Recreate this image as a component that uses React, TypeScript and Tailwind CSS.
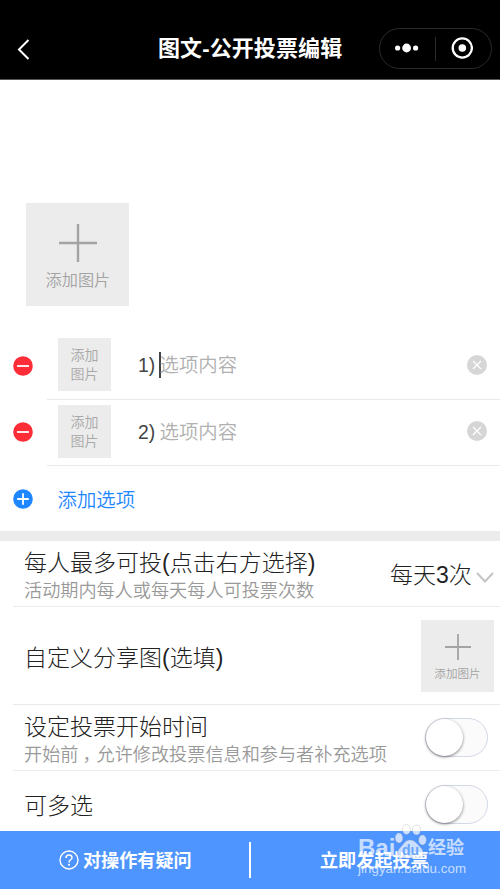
import React, { useState } from "react";

const PlusIcon = ({ size, stroke }: { size: number; stroke: number }) => (
  <svg width={size} height={size} viewBox={`0 0 ${size} ${size}`}>
    <path
      d={`M${size / 2} 0V${size}M0 ${size / 2}H${size}`}
      stroke="#a3a3a3"
      strokeWidth={stroke}
      fill="none"
    />
  </svg>
);

const RoundIcon = ({ type }: { type: "add" | "remove" }) => (
  <svg width="20" height="20" viewBox="0 0 20 20">
    <circle cx="10" cy="10" r="9.8" fill={type === "add" ? "#1f87ff" : "#ff2d37"} />
    <path
      d={type === "add" ? "M4.2 10H15.8M10 4.2V15.8" : "M4 10H16"}
      stroke="#fff"
      strokeWidth="1.8"
    />
  </svg>
);

const ClearIcon = () => (
  <svg width="20" height="20" viewBox="0 0 20 20">
    <circle cx="10" cy="10" r="10" fill="#d6d6d6" />
    <path d="M6 6L14 14M14 6L6 14" stroke="#fff" strokeWidth="1.2" />
  </svg>
);

const Header = () => (
  <div className="flex h-20 items-start border-b border-[#555] bg-black">
    <div className="w-[158px] pt-[39px] pl-[17px]">
      <svg width="14" height="22" viewBox="0 0 14 22">
        <path d="M11.5 1L2 10.5L11.5 20" stroke="#fff" strokeWidth="2" fill="none" />
      </svg>
    </div>
    <div className="w-[221px] pt-[34px] text-[22px] leading-[30px] font-bold tracking-[0.1px] whitespace-nowrap text-white">
      图文-公开投票编辑
    </div>
    <div className="mt-7 flex h-[41px] w-[113px] items-center rounded-full border border-[#2b2b2b]">
      <div className="flex w-[55px] items-center justify-center pr-[2px] pb-px">
        <svg width="24" height="10" viewBox="0 0 24 10">
          <circle cx="2.6" cy="5" r="2.6" fill="#fff" />
          <circle cx="11.6" cy="5" r="4.4" fill="#fff" />
          <circle cx="20.6" cy="5" r="2.6" fill="#fff" />
        </svg>
      </div>
      <div className="h-6 w-px bg-[#2b2b2b]" />
      <div className="flex flex-1 pb-px pl-[15px]">
        <svg width="22" height="22" viewBox="0 0 22 22">
          <circle cx="11.3" cy="11" r="9.6" fill="none" stroke="#fff" strokeWidth="2.3" />
          <circle cx="11.3" cy="11" r="3.8" fill="#fff" />
        </svg>
      </div>
    </div>
  </div>
);

const OptionRow = ({ index, active }: { index: number; active?: boolean }) => (
  <div className="flex h-[66.5px] pl-[13px]">
    <div className="w-[34px] pt-[22.6px]">
      <RoundIcon type="remove" />
    </div>
    <div className="flex flex-1 border-b-[1.5px] border-[#e9e9e9] pl-[11px]">
      <div className="mt-[5px] h-[53px] w-[53px] bg-[#ececec] pt-2 text-center text-sm leading-[19px] text-[#a8a8a8]">
        添加
        <br />
        图片
      </div>
      <div className="ml-[27px] flex pt-[19px] text-[19.4px] leading-[26px]">
        <span className="w-[21px] text-[#444]">{index})</span>
        <span className={active ? "h-[26px] w-0.5 bg-[#444]" : "w-0.5"} />
        <span className="-ml-[1.5px] text-[#b0b0b0]">选项内容</span>
      </div>
      <div className="ml-auto pt-[21.6px] pr-[13px]">
        <ClearIcon />
      </div>
    </div>
  </div>
);

const Switch = () => {
  const [on, setOn] = useState(false);
  return (
    <button
      type="button"
      onClick={() => setOn(!on)}
      className={`flex h-[39px] w-[63px] rounded-full border border-[#d3d8e6] ${
        on ? "justify-end bg-[#4e95ff]" : "bg-[#fbfbfb]"
      }`}
    >
      <span className="h-[37px] w-[37px] rounded-full bg-white shadow-[0_1px_3px_rgba(0,0,0,0.5)]" />
    </button>
  );
};

const Watermark = () => (
  <div className="pointer-events-none absolute top-[-10px] left-[358px] h-[60px] w-[112px] text-white/70">
    <div className="flex h-[40px] items-end font-bold">
      <span className="w-[36px] font-['Liberation_Sans'] text-[24px] leading-[26px]">Bai</span>
      <svg width="34" height="36" viewBox="0 0 34 36" className="mb-[2px]">
        <g fill="#fff" fillOpacity="0.7" stroke="#999" strokeOpacity="0.4" strokeWidth="0.7">
          <ellipse cx="5" cy="15" rx="3.8" ry="5" />
          <ellipse cx="12.5" cy="6.5" rx="4" ry="5" />
          <ellipse cx="22.5" cy="7" rx="4" ry="5" />
          <ellipse cx="28.5" cy="17" rx="3.8" ry="5" />
          <path d="M16 17C11 17 9 22 6 25C2 29 4 35 9 35H24C29 35 31 29 27 25C24 22 21 17 16 17Z" />
        </g>
        <text x="8" y="32" fontSize="14" fontFamily="Liberation Sans" fontWeight="bold" fill="#68a4ff">
          du
        </text>
      </svg>
      <span className="text-[18px] leading-[26px]">经验</span>
    </div>
    <div className="font-['Liberation_Sans'] text-[13.3px] leading-4 font-medium tracking-[0.05px]">
      jingyan.baidu.com
    </div>
  </div>
);

const App = () => {
  return (
    <div className="h-[889px] w-[500px] overflow-hidden bg-white font-['Liberation_Sans','Noto_Sans_CJK_SC',sans-serif] font-[350]">
      <Header />
      <div className="h-[253px] pt-[123px] pl-[26.4px]">
        <div className="flex h-[103px] w-[103px] flex-col items-center bg-[#ececec] pt-[21px] text-[16.2px] leading-6 text-[#a3a3a3]">
          <PlusIcon size={38} stroke={2.4} />
          <span className="mt-[6px]">添加图片</span>
        </div>
      </div>
      <OptionRow index={1} active />
      <OptionRow index={2} />
      <div className="flex h-[65px] pt-[23px] pl-[13px]">
        <RoundIcon type="add" />
        <span className="-mt-[2px] ml-[24.5px] text-[19.4px] leading-[26px] text-[#1f87ff]">添加选项</span>
      </div>
      <div className="h-[10px] bg-[#ececec]" />

      <div className="ml-[13px] flex h-[66px] border-b-[1.5px] border-[#ececec] pl-[11px]">
        <div className="w-[366px] pt-[7px] whitespace-nowrap">
          <div className="text-[23px] leading-[31px] font-light text-[#222]">每人最多可投(点击右方选择)</div>
          <div className="text-[18.15px] leading-6 text-[#999]">活动期内每人或每天每人可投票次数</div>
        </div>
        <div className="w-[86px] pt-[19px] text-[23px] leading-[31px] font-light whitespace-nowrap text-[#222]">
          每天3次
        </div>
        <svg width="18" height="12" viewBox="0 0 18 12" className="mt-[31px]">
          <path d="M1 1L9 9.5L17 1" stroke="#c4c4c4" strokeWidth="2" fill="none" />
        </svg>
      </div>

      <div className="ml-[13px] flex h-[98px] border-b border-[#e9e9e9] pl-[11px]">
        <div className="w-[397px] pt-[36px] text-[23px] leading-[30px] font-light text-[#222]">
          自定义分享图(选填)
        </div>
        <div className="mt-[13px] flex h-[72px] w-[73px] flex-col items-center bg-[#ececec] pt-[14px] text-[11.6px] leading-4 text-[#a3a3a3]">
          <PlusIcon size={26} stroke={1.8} />
          <span className="mt-[6px]">添加图片</span>
        </div>
      </div>

      <div className="ml-[13px] flex h-[66px] border-b-[1.5px] border-[#ececec] pl-[11px]">
        <div className="w-[401px] pt-[7px] whitespace-nowrap">
          <div className="text-[23px] leading-[31px] font-light text-[#222]">设定投票开始时间</div>
          <div className="text-[18.15px] leading-6 text-[#999]">
            开始前<span className="relative left-1">，</span>允许修改投票信息和参与者补充选项
          </div>
        </div>
        <div className="pt-[13px]">
          <Switch />
        </div>
      </div>

      <div className="ml-[13px] flex h-[60px] pl-[11px]">
        <div className="w-[401px] pt-[20px] text-[23px] leading-[30px] font-light text-[#222]">可多选</div>
        <div className="pt-[14px]">
          <Switch />
        </div>
      </div>

      <div className="relative flex h-[58px] bg-[#4e95ff] text-[18.1px] leading-[26px] font-bold text-white">
        <div className="flex w-[249px] pt-[17px] pl-[59px]">
          <svg width="20" height="20" viewBox="0 0 20 20" className="mt-[2px]">
            <circle cx="10" cy="10" r="9" fill="none" stroke="#fff" strokeWidth="1.4" />
            <path
              d="M7 8C7 6 8.3 5 10 5S13 6.1 13 7.7C13 9.8 10 9.8 10 12.4"
              fill="none"
              stroke="#fff"
              strokeWidth="1.5"
            />
            <circle cx="10" cy="14.7" r="1" fill="#fff" />
          </svg>
          <span className="ml-1">对操作有疑问</span>
        </div>
        <div className="mt-[11px] h-9 w-0.5 bg-white" />
        <div className="pt-[17px] pl-[69px]">立即发起投票</div>
        <Watermark />
      </div>
    </div>
  );
};

export default App;
